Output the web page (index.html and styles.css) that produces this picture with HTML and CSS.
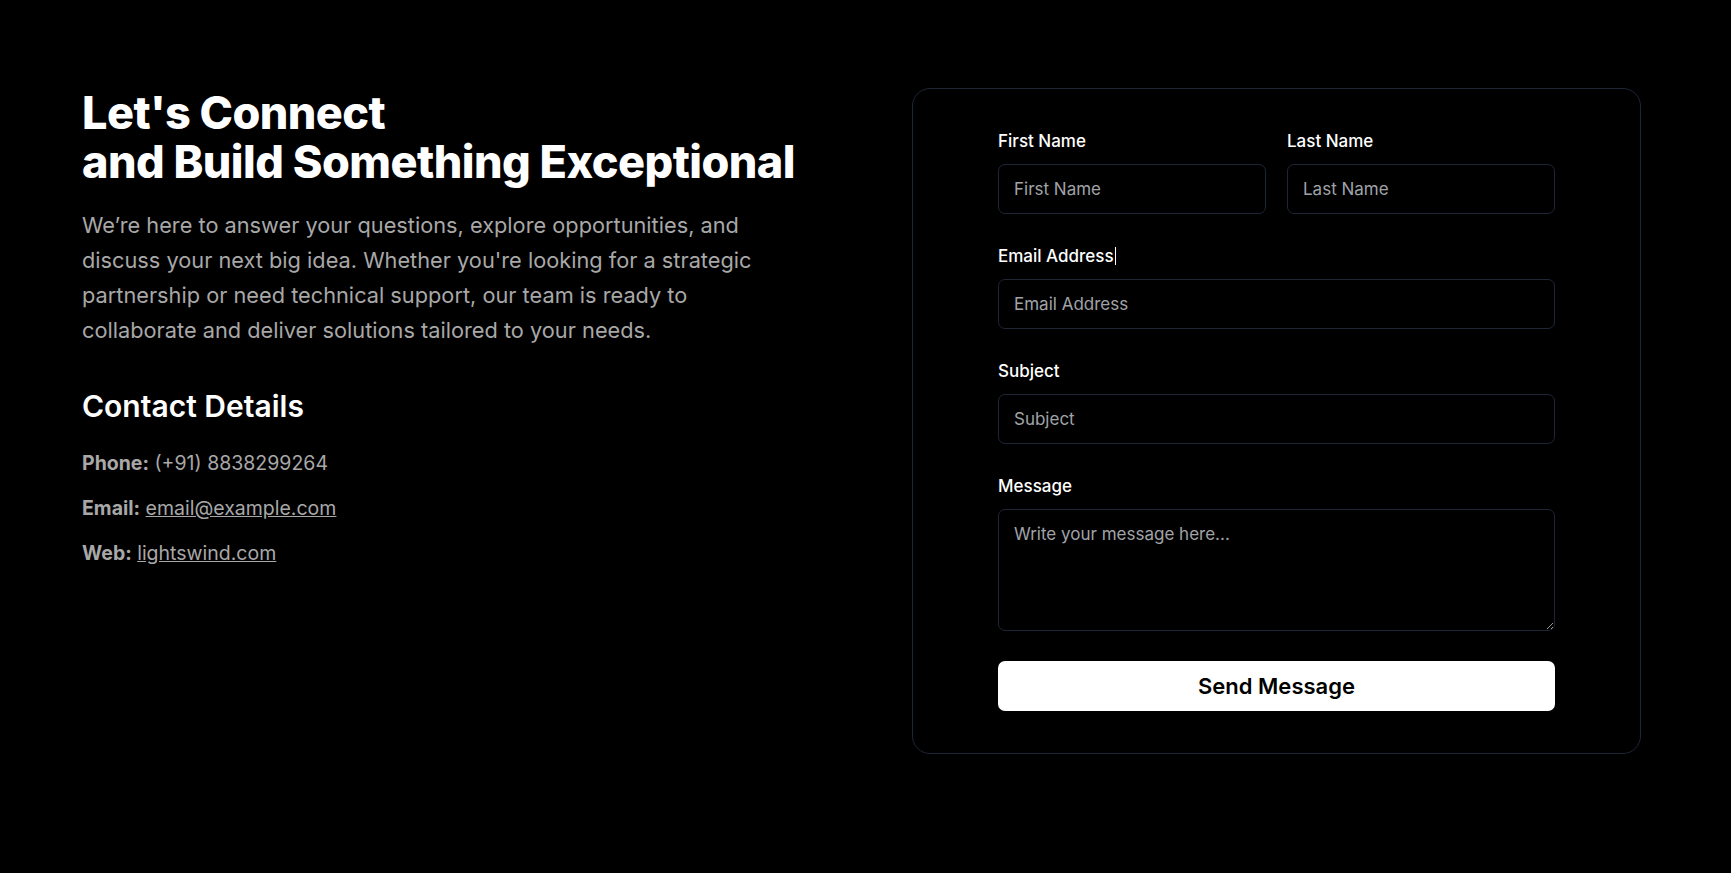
FILE: index.html
```html
<!DOCTYPE html>
<html lang="en">
<head>
    <meta charset="UTF-8">
    <meta name="viewport" content="width=device-width, initial-scale=1.0">
    <title>Contact Us</title>
    <link rel="stylesheet" href="styles.css">
</head>
<body>
    <section class="contact">
        <div class="contact-info">
            <h1>Let's Connect<br>and Build Something Exceptional</h1>
            <p class="intro">We’re here to answer your questions, explore opportunities, and discuss your next big idea. Whether you're looking for a strategic partnership or need technical support, our team is ready to collaborate and deliver solutions tailored to your needs.</p>

            <h2>Contact Details</h2>
            <ul class="details">
                <li><strong>Phone:</strong> (+91) 8838299264</li>
                <li><strong>Email:</strong> <a href="mailto:email@example.com">email@example.com</a></li>
                <li><strong>Web:</strong> <a href="#">lightswind.com</a></li>
            </ul>
        </div>

        <div class="card">
            <form class="contact-form" id="contactForm">
                <div class="form-row">
                    <div class="form-group">
                        <label for="firstName">First Name</label>
                        <input type="text" id="firstName" name="first_name" placeholder="First Name">
                    </div>
                    <div class="form-group">
                        <label for="lastName">Last Name</label>
                        <input type="text" id="lastName" name="last_name" placeholder="Last Name">
                    </div>
                </div>

                <div class="form-group">
                    <label for="email">Email Address<span class="caret"></span></label>
                    <input type="email" id="email" name="email" placeholder="Email Address">
                </div>

                <div class="form-group">
                    <label for="subject">Subject</label>
                    <input type="text" id="subject" name="subject" placeholder="Subject">
                </div>

                <div class="form-group">
                    <label for="message">Message</label>
                    <textarea id="message" name="message" placeholder="Write your message here..."></textarea>
                </div>

                <button type="submit">Send Message</button>
            </form>
        </div>
    </section>
</body>
</html>
```

FILE: styles.css
```css
* {
    box-sizing: border-box;
}
body {
    margin: 0;
    background: #000;
    color: #fff;
    font-family: 'Inter', 'Noto Sans', sans-serif;
}
.contact {
    display: grid;
    grid-template-columns: 1fr 729px;
    column-gap: 40px;
    padding: 88px 90px 0 82px;
    min-height: 873px;
}
h1 {
    margin: 0;
    font-size: 45px;
    line-height: 49px;
    font-weight: 800;
    letter-spacing: -0.012em;
}
.intro {
    margin: 22px 0 0;
    max-width: 690px;
    font-size: 21.75px;
    line-height: 35px;
    color: #a8a8a8;
}
h2 {
    margin: 40px 0 0;
    font-size: 30px;
    line-height: 36px;
    font-weight: 600;
}
.details {
    list-style: none;
    margin: 25px 0 0;
    padding: 0;
    display: flex;
    flex-direction: column;
    gap: 17px;
    font-size: 19.5px;
    line-height: 28px;
    color: #a8a8a8;
}
.details strong {
    font-weight: 700;
}
.details a {
    color: #a8a8a8;
}
.card {
    align-self: start;
    border: 1px solid #1e2636;
    border-radius: 18px;
    padding: 40px 0 42px;
}
.contact-form {
    width: 557px;
    margin: 0 auto;
    display: flex;
    flex-direction: column;
    gap: 30px;
}
.form-row {
    display: grid;
    grid-template-columns: 1fr 1fr;
    gap: 21px;
}
label {
    display: block;
    margin-bottom: 11px;
    font-size: 17px;
    line-height: 24px;
    font-weight: 500;
}
.caret {
    display: inline-block;
    width: 1px;
    height: 18px;
    margin-left: 1px;
    vertical-align: -3px;
    background: #fff;
}
input,
textarea {
    display: block;
    width: 100%;
    height: 50px;
    padding: 0 15px;
    background: #000;
    border: 1px solid #1e2636;
    border-radius: 7px;
    color: #fff;
    font-family: inherit;
    font-size: 17px;
}
textarea {
    height: 122px;
    padding: 12px 15px;
    line-height: 24px;
    resize: vertical;
}
input::placeholder,
textarea::placeholder {
    color: #a0a3a8;
}
button {
    height: 50px;
    background: #fff;
    color: #000;
    border: none;
    border-radius: 7px;
    font-family: inherit;
    font-size: 22px;
    font-weight: 600;
    cursor: pointer;
}
```
